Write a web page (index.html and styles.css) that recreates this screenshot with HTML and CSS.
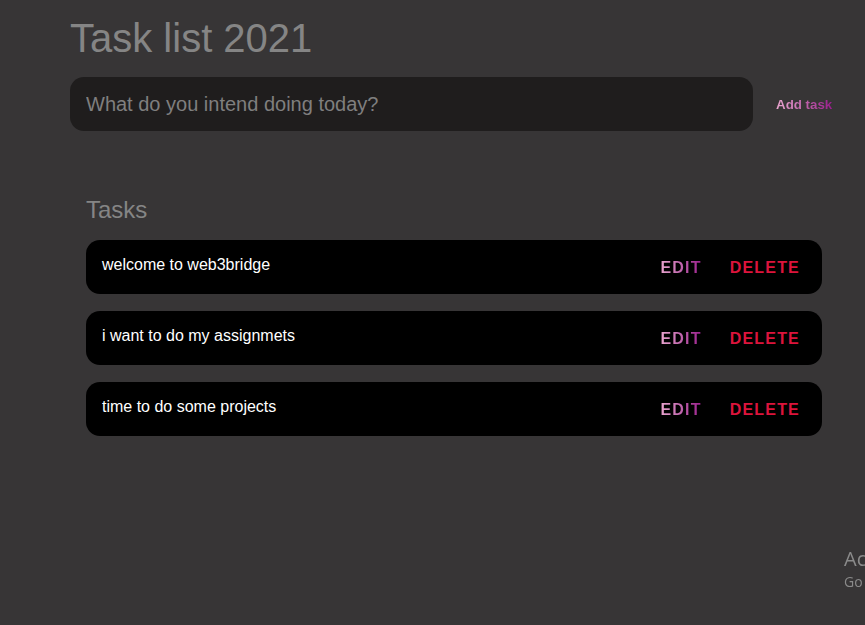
FILE: index.html
```html
<!DOCTYPE html>
<html lang="en">
<head>
<meta charset="utf-8">
<title>Task list 2021</title>
<link rel="stylesheet" href="styles.css">
</head>
<body>
<div class="app">
  <h1 class="title">Task list 2021</h1>
  <form class="new-task">
    <input class="task-input" type="text" placeholder="What do you intend doing today?">
    <button class="add-btn" type="button"><span class="grad">Add task</span></button>
  </form>
  <section class="tasks">
    <h2 class="tasks-title">Tasks</h2>
    <div class="task-list">
      <div class="task">
        <span class="task-text">welcome to web3bridge</span>
        <div class="actions">
          <button class="edit" type="button"><span class="grad">EDIT</span></button>
          <button class="delete" type="button">DELETE</button>
        </div>
      </div>
      <div class="task">
        <span class="task-text">i want to do my assignmets</span>
        <div class="actions">
          <button class="edit" type="button"><span class="grad">EDIT</span></button>
          <button class="delete" type="button">DELETE</button>
        </div>
      </div>
      <div class="task">
        <span class="task-text">time to do some projects</span>
        <div class="actions">
          <button class="edit" type="button"><span class="grad">EDIT</span></button>
          <button class="delete" type="button">DELETE</button>
        </div>
      </div>
    </div>
  </section>
</div>
<div class="watermark">
  <div class="wm-title">Activate Windows</div>
  <div class="wm-sub">Go to Settings to activate Windows.</div>
</div>
</body>
</html>
```
FILE: styles.css
```css
html, body {
  margin: 0;
  padding: 0;
  height: 100%;
  overflow: hidden;
}
body {
  background: #373536;
  font-family: "Liberation Sans", Arial, sans-serif;
}
.app {
  padding: 15px 0 0 70px;
  width: 795px;
  box-sizing: border-box;
}
.title {
  margin: 0;
  font-size: 40px;
  font-weight: normal;
  line-height: 46px;
  color: #858585;
}
.new-task {
  margin: 16px 0 0;
  display: flex;
  align-items: center;
  gap: 23px;
}
.task-input {
  flex: none;
  width: 683px;
  height: 54px;
  box-sizing: border-box;
  border: none;
  outline: none;
  border-radius: 14px;
  background: #1f1d1d;
  padding: 0 16px;
  font-family: "Liberation Sans", Arial, sans-serif;
  font-size: 20px;
  color: #ddd;
}
.task-input::placeholder {
  color: #7f7f7f;
}
.add-btn {
  flex: none;
  white-space: nowrap;
  border: none;
  background: none;
  padding: 0;
  font-family: "Liberation Sans", Arial, sans-serif;
  font-size: 13.33px;
  font-weight: bold;
  cursor: pointer;
}
.grad {
  background: linear-gradient(90deg, #eaa6cf 0%, #c46cb0 45%, #9a1d8c 100%);
  -webkit-background-clip: text;
  background-clip: text;
  color: transparent;
}
.tasks {
  margin: 65px 0 0 16px;
}
.tasks-title {
  margin: 0;
  font-size: 24px;
  font-weight: normal;
  line-height: 28px;
  color: #858585;
}
.task-list {
  margin-top: 16px;
  display: flex;
  flex-direction: column;
  gap: 17px;
}
.task {
  width: 736px;
  height: 54px;
  box-sizing: border-box;
  background: #000;
  border-radius: 14px;
  padding: 0 22px 4px 16px;
  display: flex;
  align-items: center;
  justify-content: space-between;
}
.task-text {
  color: #fff;
  font-size: 16px;
}
.actions {
  display: flex;
  align-items: center;
  gap: 28px;
  padding-top: 5px;
}
.edit, .delete {
  border: none;
  background: none;
  padding: 0;
  font-family: "Liberation Sans", Arial, sans-serif;
  font-size: 16px;
  font-weight: bold;
  letter-spacing: 1.2px;
  cursor: pointer;
}
.delete {
  color: #dc143c;
}
.watermark {
  position: fixed;
  left: 844px;
  top: 546px;
  white-space: nowrap;
  font-family: "Open Sans", "Noto Sans", sans-serif;
  color: #8a8a8a;
}
.wm-title {
  font-size: 20px;
  line-height: 26px;
}
.wm-sub {
  font-size: 14px;
  line-height: 20px;
}
```
